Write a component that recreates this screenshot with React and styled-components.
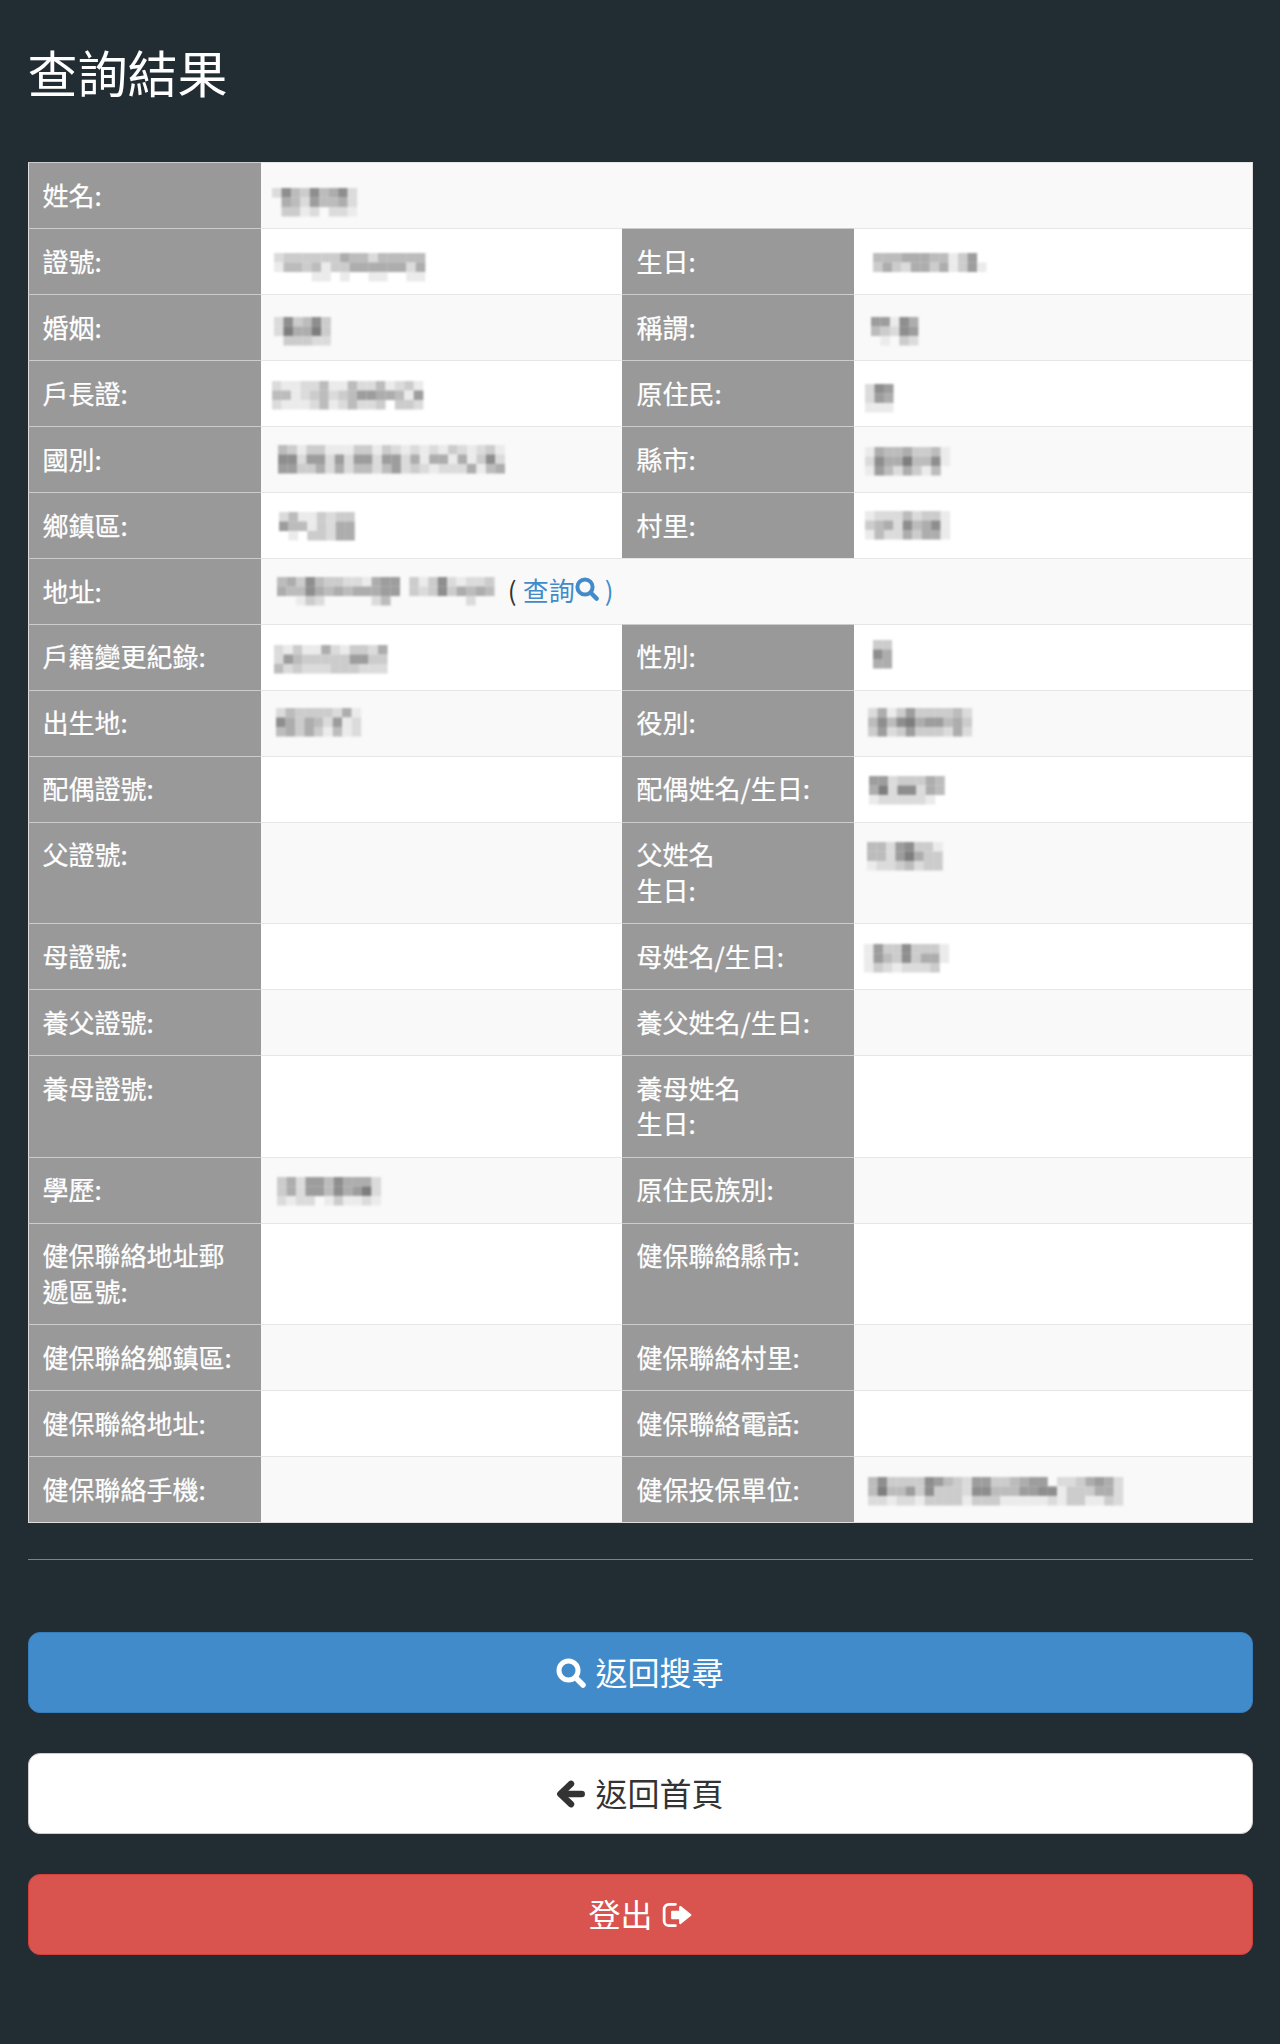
import React from "react";
import styled, { createGlobalStyle } from "styled-components";

const GlobalStyle = createGlobalStyle`
  html, body {
    margin: 0;
    padding: 0;
    background: #222c33;
  }
`;

const Page = styled.div`
  box-sizing: border-box;
  width: 1280px;
  height: 2044px;
  padding: 43px 27.5px 90px;
  font-family: "Noto Sans CJK TC", "Noto Sans", sans-serif;
  color: #333;
  background: #222c33;
`;

const Title = styled.h2`
  margin: 0 0 62px;
  font-size: 50px;
  font-weight: 400;
  line-height: 57px;
  color: #fff;
`;

const Table = styled.table`
  width: 1224px;
  table-layout: fixed;
  border-collapse: collapse;
  font-size: 26px;
  line-height: 35.6px;
  border: 1px solid #ddd;
`;

const Row = styled.tr`
  background: ${(p) => (p.$odd ? "#f9f9f9" : "#fff")};
`;

const Label = styled.th`
  padding: 13.7px 14px 15.7px ${(p) => (p.$second ? 14.5 : 14)}px;
  background: #999;
  color: #fff;
  font-weight: 400;
  -webkit-text-stroke: 0.25px #fff;
  text-align: left;
  vertical-align: top;
  border-top: 1px solid #ccc;
`;

const Value = styled.td`
  padding: 14.7px 14px;
  vertical-align: top;
  border-top: 1px solid #e6e6e6;
`;

const Blur = styled.svg`
  display: ${(p) => (p.$inline ? "inline-block" : "block")};
  flex-shrink: 0;
  margin: ${(p) => p.$y}px 0 ${(p) => -p.$y}px ${(p) => p.$x}px;
  filter: blur(0.8px);
  overflow: visible;
`;

const AddressLine = styled.div`
  display: flex;
  align-items: center;
  white-space: pre;
`;

const Paren = styled.span`
  margin-left: ${(p) => p.$gap}px;
  margin-top: -2px;
  color: ${(p) => p.$color || "#333"};
`;

const LookupLink = styled.a`
  display: flex;
  align-items: center;
  margin-left: 6px;
  margin-top: -2px;
  color: #428bca;
  svg {
    width: 24px;
    height: 24px;
  }
`;

const Rule = styled.hr`
  margin: 36px 0 72px;
  border: 0;
  border-top: 1px solid #78848b;
`;

const Buttons = styled.div`
  display: flex;
  flex-direction: column;
  gap: 40px;
`;

const Button = styled.a`
  box-sizing: border-box;
  display: flex;
  align-items: center;
  justify-content: center;
  gap: 9px;
  height: 81px;
  border: 1px solid ${(p) => p.$border};
  border-radius: 12px;
  background: ${(p) => p.$bg};
  color: ${(p) => p.$color};
  font-size: 32px;
  span {
    margin-top: -4px;
  }
  svg {
    width: 30px;
    height: 30px;
  }
`;

const CELL = 9.45;

// each string is one row of the pixelated value, digit = how dark the block is
function Mosaic({ rows, x, y, inline }) {
  const cols = Math.max(...rows.map((r) => r.length));
  return (
    <Blur
      $x={x}
      $y={y}
      $inline={inline}
      width={cols * CELL}
      height={rows.length * CELL}
      viewBox={`0 0 ${cols * CELL} ${rows.length * CELL}`}
    >
      {rows.map((row, r) =>
        row.split("").map((d, c) => {
          const g = Math.round(250 - Number(d) * 15.5);
          return d === "0" ? null : (
            <rect
              key={`${r}-${c}`}
              x={c * CELL}
              y={r * CELL}
              width={CELL + 0.2}
              height={CELL + 0.2}
              fill={`rgb(${g},${g},${g})`}
            />
          );
        })
      )}
    </Blur>
  );
}

const SearchIcon = () => (
  <svg viewBox="0 0 24 24" fill="none" stroke="currentColor">
    <circle cx="10" cy="10" r="7.6" strokeWidth="4" />
    <path d="M15.800 15.800L21.600 21.600" strokeWidth="4.400" strokeLinecap="round" />
  </svg>
);

const ArrowLeftIcon = () => (
  <svg viewBox="0 0 28 28" fill="none" stroke="currentColor" strokeWidth="6" strokeLinecap="round" strokeLinejoin="round">
    <path d="M24 14H5" />
    <path d="M14 4.500L4 14L14 23.500" />
  </svg>
);

const SignOutIcon = () => (
  <svg viewBox="0 0 28 24" fill="none">
    <path
      d="M12.500 2H6.500A4.500 4.500 0 0 0 2 6.500V17.500A4.500 4.500 0 0 0 6.500 22H12.500"
      stroke="currentColor"
      strokeWidth="2.600"
      strokeLinecap="round"
    />
    <path
      d="M9.500 9H17V4.500L26.500 12L17 19.500V15H9.500Z"
      fill="currentColor"
      stroke="currentColor"
      strokeWidth="2"
      strokeLinejoin="round"
    />
  </svg>
);

const m = {
  name: { rows: ["274374572", "054264452", "033120221"], x: -3, y: 10 },
  id: { rows: ["2333333544244444", "1443413355555525", "0000110100110011"], x: -1, y: 9 },
  marriage: { rows: ["273473", "285583", "033322"], x: -1, y: 7 },
  head: { rows: ["2112241142241231", "4412342346655416", "2111241242230332"], x: -3, y: 5 },
  country: { rows: ["431331113313212121321231", "772662626626625155151372", "663352524424623212225145"], x: 3, y: 3 },
  township: { rows: ["24113233", "64413255", "01033255"], x: 4, y: 4 },
  address: { rows: ["45374332215660313721223", "54475454555660323735454", "00132000002400000000200"], x: 2, y: 1 },
  records: { rows: ["213115213325", "264333336633", "423222333222"], x: -1, y: 6 },
  birthplace: { rows: ["243333251", "753542612", "453531412"], x: 1, y: 2.5 },
  education: { rows: ["35266475552", "35266475682", "21220131121"], x: 2, y: 5 },
  birthday: { rows: ["444555441360", "353255351361"], x: 5, y: 9 },
  title: { rows: ["66175", "43276", "01032"], x: 3, y: 7 },
  native: { rows: ["276", "265", "111"], x: -3, y: 8 },
  county: { rows: ["154453341", "275584471", "164253140"], x: -3, y: 5 },
  village: { rows: ["122242331", "345274571", "142253551"], x: -3, y: 3 },
  gender: { rows: ["33", "75", "55"], x: 5, y: 1 },
  service: { rows: ["25136333342", "47478566453", "36236333252"], x: 0, y: 3 },
  spouse: { rows: ["66233354", "58277254", "12222210"], x: 1, y: 5 },
  father: { rows: ["44267331", "44268533", "12234233"], x: -1, y: 5 },
  mother: { rows: ["163373331", "164373551", "132122230"], x: -4, y: 5 },
  employer: { rows: ["473333764326633456602235652", "484463733327744466771333552", "221221333313331111121331132"], x: 0, y: 5 },
};

const rows = [
  [["姓名:", m.name, 3]],
  [["證號:", m.id], ["生日:", m.birthday]],
  [["婚姻:", m.marriage], ["稱謂:", m.title]],
  [["戶長證:", m.head], ["原住民:", m.native]],
  [["國別:", m.country], ["縣市:", m.county]],
  [["鄉鎮區:", m.township], ["村里:", m.village]],
  [["地址:", "address", 3]],
  [["戶籍變更紀錄:", m.records], ["性別:", m.gender]],
  [["出生地:", m.birthplace], ["役別:", m.service]],
  [["配偶證號:"], ["配偶姓名/生日:", m.spouse]],
  [["父證號:"], [<>父姓名<br />生日:</>, m.father]],
  [["母證號:"], ["母姓名/生日:", m.mother]],
  [["養父證號:"], ["養父姓名/生日:"]],
  [["養母證號:"], [<>養母姓名<br />生日:</>]],
  [["學歷:", m.education], ["原住民族別:"]],
  [["健保聯絡地址郵遞區號:"], ["健保聯絡縣市:"]],
  [["健保聯絡鄉鎮區:"], ["健保聯絡村里:"]],
  [["健保聯絡地址:"], ["健保聯絡電話:"]],
  [["健保聯絡手機:"], ["健保投保單位:", m.employer]],
];

function CellValue({ value }) {
  if (value === "address") {
    return (
      <AddressLine>
        <Mosaic {...m.address} inline />
        <Paren $gap={14}>(</Paren>
        <LookupLink>
          查詢
          <SearchIcon />
        </LookupLink>
        <Paren $gap={6} $color="#428bca">)</Paren>
      </AddressLine>
    );
  }
  return value ? <Mosaic {...value} /> : null;
}

export default function App() {
  return (
    <Page>
      <GlobalStyle />
      <Title>查詢結果</Title>
      <Table>
        <colgroup>
          <col width="232.5" />
          <col width="361.5" />
          <col width="232" />
          <col width="398" />
        </colgroup>
        <tbody>
          {rows.map((row, i) => (
            <Row key={i} $odd={i % 2 === 0}>
              {row.map(([label, value, span], j) => (
                <React.Fragment key={j}>
                  <Label $second={j === 1}>{label}</Label>
                  <Value colSpan={span}>
                    <CellValue value={value} />
                  </Value>
                </React.Fragment>
              ))}
            </Row>
          ))}
        </tbody>
      </Table>
      <Rule />
      <Buttons>
        <Button $bg="#428bca" $border="#357ebd" $color="#fff">
          <SearchIcon />
          <span>返回搜尋</span>
        </Button>
        <Button $bg="#fff" $border="#ccc" $color="#333">
          <ArrowLeftIcon />
          <span>返回首頁</span>
        </Button>
        <Button $bg="#d9534f" $border="#d43f3a" $color="#fff">
          <span>登出</span>
          <SignOutIcon />
        </Button>
      </Buttons>
    </Page>
  );
}
